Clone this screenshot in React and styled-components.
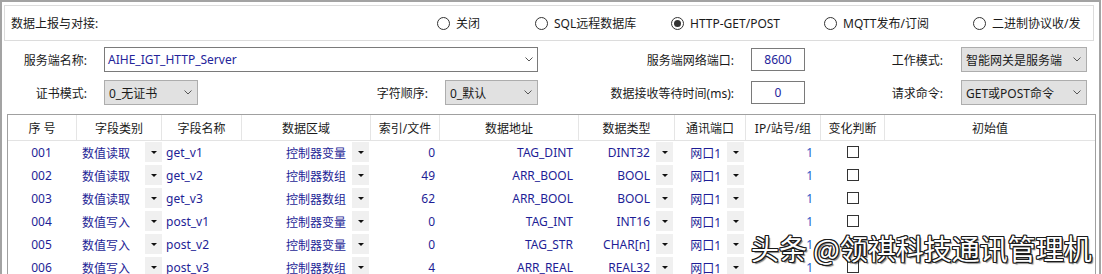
import React from 'react'
import styled, { createGlobalStyle } from 'styled-components'

const Global = createGlobalStyle`
  body {
    margin: 0;
    background: #fff;
  }
  * {
    box-sizing: border-box;
  }
`

const Window = styled.div`
  position: relative;
  width: 1101px;
  height: 274px;
  overflow: hidden;
  background: #fff;
  border: 2px solid #a3a3a3;
  border-bottom: none;
  font-family: "Noto Sans", "Noto Sans CJK SC", sans-serif;
  font-size: 12px;
  color: #1a1a1a;
`

const GroupBox = styled.div`
  margin: 3px 0 0 2px;
  width: 1090px;
  height: 36px;
  border: 1px solid #dcdcdc;
  display: flex;
  align-items: center;
  padding-left: 6px;
`

const GroupTitle = styled.div`
  flex: 0 0 426px;
`

const RadioGroup = styled.div`
  display: grid;
  grid-template-columns: 98px 136px 153px 149px auto;
  align-items: center;
`

const RadioItem = styled.label`
  display: flex;
  align-items: center;
  gap: 6px;
  white-space: nowrap;
`

const RadioCircle = styled.span`
  width: 13px;
  height: 13px;
  border-radius: 50%;
  border: 1px solid #333;
  background: #fff;
  display: flex;
  align-items: center;
  justify-content: center;
  &::after {
    content: '';
    width: 7px;
    height: 7px;
    border-radius: 50%;
    background: ${p => (p.$checked ? '#333' : 'transparent')};
  }
`

const Form = styled.div`
  display: grid;
  grid-template-columns: 85px 17px 94px 230px 17px 93px 196px 17px 54px 138px 18px 126px;
  grid-template-rows: 25px 25px;
  row-gap: 8px;
  margin-top: 6px;
`

const Label = styled.span`
  grid-column: ${p => p.$col};
  justify-self: end;
  align-self: center;
  white-space: nowrap;
`

const ComboEdit = styled.div`
  grid-column: ${p => p.$col};
  height: 25px;
  border: 1px solid #7a7a7a;
  background: #fff;
  display: flex;
  align-items: center;
  justify-content: space-between;
  padding: 0 4px 0 3px;
  color: #24249a;
`

const TextBox = styled.div`
  grid-column: ${p => p.$col};
  align-self: center;
  height: 23px;
  border: 1px solid #7a7a7a;
  background: #fff;
  display: flex;
  align-items: center;
  justify-content: center;
  color: #24249a;
`

const Select = styled.div`
  grid-column: ${p => p.$col};
  height: 25px;
  border: 1px solid #adadad;
  background: #e1e1e1;
  display: flex;
  align-items: center;
  justify-content: space-between;
  padding: 0 5px 0 4px;
  white-space: nowrap;
`

const Chevron = () => (
  <svg width="8" height="5" viewBox="0 0 8 5">
    <polyline points="0.5,0.5 4,4 7.5,0.5" fill="none" stroke="#555" strokeWidth="1" />
  </svg>
)

const Table = styled.div`
  margin: 9px 0 0 5px;
  width: 1089px;
  border: 1px solid #a0a0a0;
  border-bottom: none;
`

const COLS = '69px 85px 80px 129px 69px 139px 96px 71px 75px 64px 210px'

const HeaderRow = styled.div`
  display: grid;
  grid-template-columns: ${COLS};
  height: 26px;
  border-bottom: 1px solid #e3e3e3;
`

const HeaderCell = styled.div`
  display: flex;
  align-items: center;
  justify-content: center;
  border-right: 1px solid #e5e5e5;
  white-space: nowrap;
  &:last-child {
    border-right: none;
  }
`

const Row = styled.div`
  display: grid;
  grid-template-columns: ${COLS};
  height: 23px;
  color: #1e1e96;
`

const Cell = styled.div`
  display: flex;
  align-items: center;
  justify-content: ${p => p.$align || 'flex-start'};
  padding: ${p => p.$pad || '0'};
  white-space: nowrap;
  color: ${p => p.$color || 'inherit'};
`

const DropCell = styled.div`
  display: flex;
  align-items: center;
  justify-content: ${p => p.$align === 'left' ? 'space-between' : 'flex-end'};
  padding-left: ${p => p.$align === 'left' ? '5px' : '0'};
  padding-right: ${p => p.$gapRight || '2px'};
  gap: 6px;
  white-space: nowrap;
`

const DropButton = styled.span`
  width: 17px;
  height: 20px;
  margin-top: -1px;
  background: #f0f0f0;
  display: flex;
  align-items: center;
  justify-content: center;
  &::after {
    content: '';
    border-left: 3px solid transparent;
    border-right: 3px solid transparent;
    border-top: 3px solid #111;
  }
`

const CheckBox = styled.span`
  width: 12px;
  height: 12px;
  border: 1px solid #333;
  background: #fff;
  margin-top: -2px;
`

const Watermark = styled.div`
  position: absolute;
  left: 749px;
  top: 232px;
  font-family: "Noto Sans CJK SC", sans-serif;
  font-size: 28px;
  line-height: 1;
  color: #fff;
  white-space: nowrap;
  text-shadow:
    1px 1px 0 #1a1a1a, -1px -1px 0 #1a1a1a, 1px -1px 0 #1a1a1a, -1px 1px 0 #1a1a1a,
    1px 0 0 #1a1a1a, -1px 0 0 #1a1a1a, 0 1px 0 #1a1a1a, 0 -1px 0 #1a1a1a,
    2px 2px 1px rgba(0, 0, 0, 0.5);
`

const radios = ['关闭', 'SQL远程数据库', 'HTTP-GET/POST', 'MQTT发布/订阅', '二进制协议收/发']

const headers = ['序 号', '字段类别', '字段名称', '数据区域', '索引/文件', '数据地址', '数据类型', '通讯端口', 'IP/站号/组', '变化判断', '初始值']

const rows = [
  ['001', '数值读取', 'get_v1', '控制器变量', '0', 'TAG_DINT', 'DINT32', '网口1', '1'],
  ['002', '数值读取', 'get_v2', '控制器数组', '49', 'ARR_BOOL', 'BOOL', '网口1', '1'],
  ['003', '数值读取', 'get_v3', '控制器数组', '62', 'ARR_BOOL', 'BOOL', '网口1', '1'],
  ['004', '数值写入', 'post_v1', '控制器变量', '0', 'TAG_INT', 'INT16', '网口1', '1'],
  ['005', '数值写入', 'post_v2', '控制器变量', '0', 'TAG_STR', 'CHAR[n]', '网口1', '1'],
  ['006', '数值写入', 'post_v3', '控制器数组', '4', 'ARR_REAL', 'REAL32', '网口1', '1'],
]

export default function App() {
  return (
    <Window>
      <Global />
      <GroupBox>
        <GroupTitle>数据上报与对接:</GroupTitle>
        <RadioGroup>
          {radios.map((r, i) => (
            <RadioItem key={r}>
              <RadioCircle $checked={i === 2} />
              {r}
            </RadioItem>
          ))}
        </RadioGroup>
      </GroupBox>

      <Form>
        <Label $col="1">服务端名称:</Label>
        <ComboEdit $col="3 / 7">
          AIHE_IGT_HTTP_Server
          <Chevron />
        </ComboEdit>
        <Label $col="7">服务端网络端口:</Label>
        <TextBox $col="9">8600</TextBox>
        <Label $col="10">工作模式:</Label>
        <Select $col="12">
          智能网关是服务端
          <Chevron />
        </Select>

        <Label $col="1">证书模式:</Label>
        <Select $col="3">
          0_无证书
          <Chevron />
        </Select>
        <Label $col="4">字符顺序:</Label>
        <Select $col="6">
          0_默认
          <Chevron />
        </Select>
        <Label $col="7">数据接收等待时间(ms):</Label>
        <TextBox $col="9">0</TextBox>
        <Label $col="10">请求命令:</Label>
        <Select $col="12">
          GET或POST命令
          <Chevron />
        </Select>
      </Form>

      <Table>
        <HeaderRow>
          {headers.map(h => (
            <HeaderCell key={h}>{h}</HeaderCell>
          ))}
        </HeaderRow>
        {rows.map(r => (
          <Row key={r[0]}>
            <Cell $align="center" $pad="0 2px 0 0">{r[0]}</Cell>
            <DropCell $align="left" $gapRight="0">
              {r[1]}
              <DropButton />
            </DropCell>
            <Cell $pad="0 0 0 4px">{r[2]}</Cell>
            <DropCell>
              {r[3]}
              <DropButton />
            </DropCell>
            <Cell $align="flex-end" $pad="0 5px 0 0">{r[4]}</Cell>
            <Cell $align="flex-end" $pad="0 6px 0 0">{r[5]}</Cell>
            <DropCell>
              {r[6]}
              <DropButton />
            </DropCell>
            <DropCell>
              {r[7]}
              <DropButton />
            </DropCell>
            <Cell $align="flex-end" $pad="0 8px 0 0" $color="#2a5ac8">{r[8]}</Cell>
            <Cell $align="center">
              <CheckBox />
            </Cell>
            <Cell />
          </Row>
        ))}
      </Table>

      <Watermark>头条 @领祺科技通讯管理机</Watermark>
    </Window>
  )
}
